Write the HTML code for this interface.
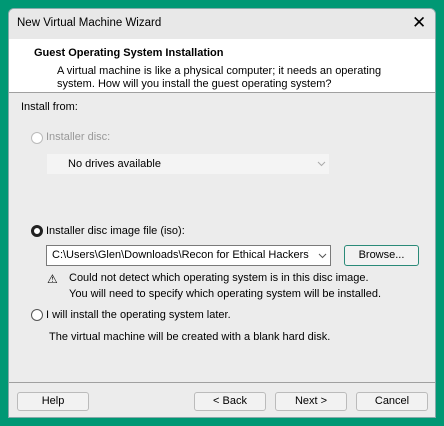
<!DOCTYPE html>
<html><head><style>
*{margin:0;padding:0;box-sizing:border-box}
body{width:444px;height:426px;background:#009874;font-family:"Liberation Sans",sans-serif;font-size:11px;color:#000;position:relative;overflow:hidden}
.win{position:absolute;left:8px;top:8px;width:428px;height:410px;background:#ececec;border:1px solid #8aa;border-radius:6px 6px 0 0;overflow:hidden}
.t{position:absolute;white-space:nowrap}
.title{left:0;top:0;width:100%;height:30px;background:#e8e8e8}
.hdr{position:absolute;left:0;top:30px;width:100%;height:54px;background:#fff;border-bottom:1px solid #a0a0a0}
.btn{position:absolute;height:19px;border:1px solid #bbb;background:#f2f2f2;border-radius:3px;text-align:center;line-height:17px}
.radio{position:absolute;width:12px;height:12px;border:1px solid #555;border-radius:50%;background:#fff}
.combo{position:absolute;background:#fff;border:1px solid #7a7a7a;height:21px;line-height:19px;padding-left:5px;overflow:hidden;white-space:nowrap}
</style></head><body>
<div class="win">
 <div class="t title"></div>
 <div class="t" style="left:8px;top:8px;font-size:11.5px">New Virtual Machine Wizard</div>
 <div class="t" style="left:403px;top:4px;font-size:17px;font-weight:300">✕</div>
 <div class="hdr"></div>
 <div class="t" style="left:25px;top:38px;font-weight:bold">Guest Operating System Installation</div>
 <div class="t" style="left:48px;top:56px">A virtual machine is like a physical computer; it needs an operating</div>
 <div class="t" style="left:48px;top:69px">system. How will you install the guest operating system?</div>
 <div class="t" style="left:12px;top:92px">Install from:</div>
 <div class="radio" style="left:22px;top:123px;border-color:#bbb"></div>
 <div class="t" style="left:37px;top:122px;color:#999">Installer disc:</div>
 <div class="t" style="left:38px;top:145px;width:282px;height:20px;background:#f4f4f4"></div>
 <div class="t" style="left:59px;top:149px">No drives available</div>
 <svg class="t" style="left:308px;top:152px" width="9" height="6"><path d="M1 1 L4.5 4.5 L8 1" fill="none" stroke="#aaa"/></svg>
 <div class="radio" style="left:22px;top:216px;border:3px solid #222"></div>
 <div class="t" style="left:37px;top:216px">Installer disc image file (iso):</div>
 <div class="combo" style="left:37px;top:236px;width:285px">C:\Users\Glen\Downloads\Recon for Ethical Hackers\s</div>
 <div class="t" style="left:300px;top:238px;width:20px;height:17px;background:#fff"></div>
 <svg class="t" style="left:309px;top:244px" width="9" height="6"><path d="M1 1 L4.5 4.5 L8 1" fill="none" stroke="#555"/></svg>
 <div class="btn" style="left:335px;top:236px;width:75px;height:21px;line-height:19px;border-color:#2a8a78">Browse...</div>
 <div class="t" style="left:38px;top:263px;font-size:12px">⚠</div>
 <div class="t" style="left:60px;top:263px">Could not detect which operating system is in this disc image.</div>
 <div class="t" style="left:60px;top:279px">You will need to specify which operating system will be installed.</div>
 <div class="radio" style="left:22px;top:300px"></div>
 <div class="t" style="left:37px;top:300px">I will install the operating system later.</div>
 <div class="t" style="left:40px;top:322px">The virtual machine will be created with a blank hard disk.</div>
 <div class="t" style="left:0;top:373px;width:100%;border-top:1px solid #a0a0a0"></div>
 <div class="btn" style="left:8px;top:383px;width:72px">Help</div>
 <div class="btn" style="left:185px;top:383px;width:72px">&lt; Back</div>
 <div class="btn" style="left:266px;top:383px;width:72px">Next &gt;</div>
 <div class="btn" style="left:347px;top:383px;width:72px">Cancel</div>
</div>
</body></html>
